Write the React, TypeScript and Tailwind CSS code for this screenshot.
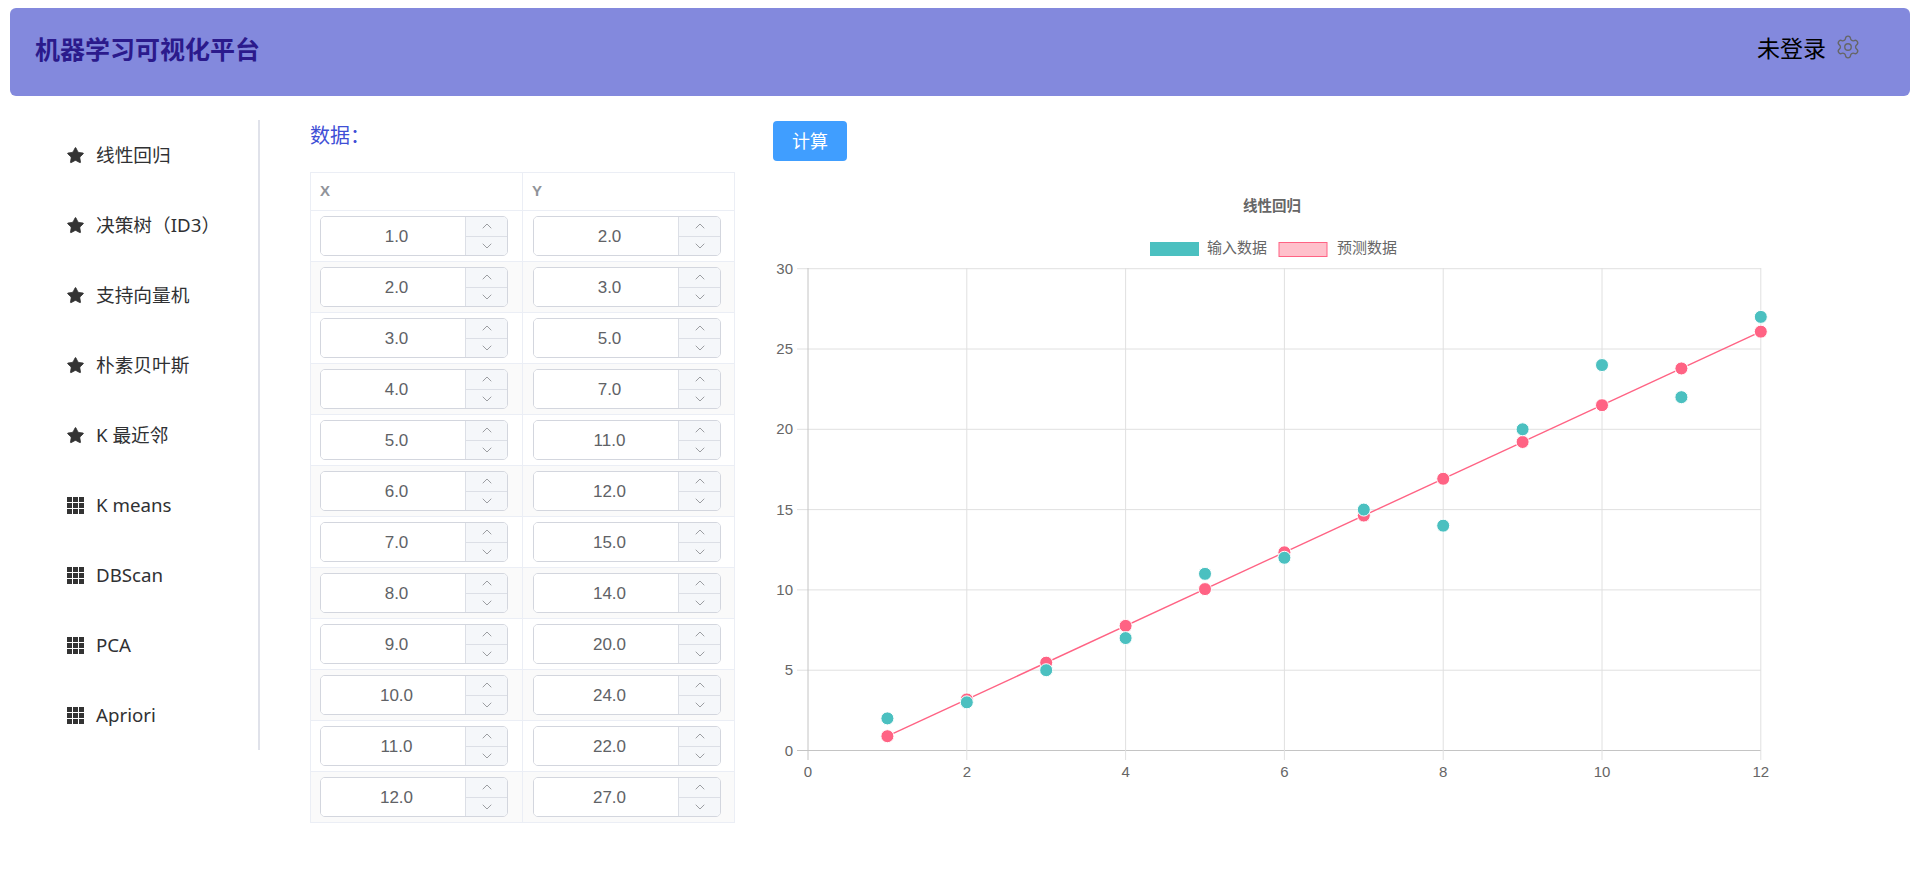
import React from 'react';
import { Settings, ChevronUp, ChevronDown, Star } from 'lucide-react';

const CJK = '"Noto Sans", "Noto Sans CJK SC", sans-serif';

const menuItems = [
  { label: '线性回归', icon: 'star' },
  { label: '决策树（ID3）', icon: 'star' },
  { label: '支持向量机', icon: 'star' },
  { label: '朴素贝叶斯', icon: 'star' },
  { label: 'K 最近邻', icon: 'star' },
  { label: 'K means', icon: 'grid' },
  { label: 'DBScan', icon: 'grid' },
  { label: 'PCA', icon: 'grid' },
  { label: 'Apriori', icon: 'grid' },
];

const rows = [
  [1, 2], [2, 3], [3, 5], [4, 7], [5, 11], [6, 12],
  [7, 15], [8, 14], [9, 20], [10, 24], [11, 22], [12, 27],
];

const GridIcon = () => (
  <svg width="17" height="17" viewBox="0 0 17 17" fill="#333" className="shrink-0">
    {[0, 6, 12].map(x => [0, 6, 12].map(y => (
      <rect key={`${x}-${y}`} x={x} y={y} width="5" height="5" />
    )))}
  </svg>
);

const NumberInput = ({ value }: { value: number }) => (
  <div className="flex h-10 w-[188px] rounded-[5px] border border-[#d3d6de] bg-white overflow-hidden">
    <input
      readOnly
      value={value.toFixed(1)}
      className="min-w-0 flex-1 bg-white pl-[15px] pr-[8px] pt-[1px] text-center text-[17px] text-[#606266] outline-none"
      style={{ fontFamily: '"Liberation Sans", sans-serif' }}
    />
    <div className="flex w-[42px] flex-col border-l border-[#dcdfe6] bg-[#f5f7fa] text-[#85878c]">
      <div className="flex flex-1 items-center justify-center border-b border-[#dcdfe6]">
        <ChevronUp size={16} strokeWidth={1.2} />
      </div>
      <div className="flex flex-1 items-center justify-center">
        <ChevronDown size={16} strokeWidth={1.2} />
      </div>
    </div>
  </div>
);

// chart scale, page pixels
const px = (x: number) => 808 + x * 79.4;
const py = (y: number) => 750.5 - y * 16.06;
const predict = (x: number) => 2.29 * x - 1.4;

const Chart = () => {
  const labelFont = '"Liberation Sans", "Noto Sans CJK SC", sans-serif';
  return (
    <svg width="1147" height="620" viewBox="773 170 1147 620" className="block">
      <text x="1272" y="211" textAnchor="middle" fontSize="14.5" fontWeight="700" fill="#666" fontFamily={labelFont}>线性回归</text>

      <rect x="1150" y="242" width="49" height="14" fill="#4bc0c0" />
      <text x="1207" y="249" fontSize="15" fill="#666" fontFamily={labelFont} dominantBaseline="middle">输入数据</text>
      <rect x="1279" y="242.5" width="48" height="14" fill="#ffc0cb" stroke="#ff6384" />
      <text x="1337" y="249" fontSize="15" fill="#666" fontFamily={labelFont} dominantBaseline="middle">预测数据</text>

      {[0, 5, 10, 15, 20, 25, 30].map(v => (
        <g key={v}>
          <line x1="797" x2="1761" y1={py(v)} y2={py(v)} stroke={v === 0 ? '#c4c4c4' : '#e0e0e0'} />
          <text x="793" y={py(v) + 5} textAnchor="end" fontSize="15" fill="#666" fontFamily={labelFont}>{v}</text>
        </g>
      ))}
      {[0, 2, 4, 6, 8, 10, 12].map(v => (
        <g key={v}>
          <line x1={px(v)} x2={px(v)} y1="268" y2="760" stroke={v === 0 ? '#c4c4c4' : '#e0e0e0'} />
          <text x={px(v)} y="777" textAnchor="middle" fontSize="15" fill="#666" fontFamily={labelFont}>{v}</text>
        </g>
      ))}

      <line x1={px(1)} y1={py(predict(1))} x2={px(12)} y2={py(predict(12))} stroke="#ff6384" strokeWidth="1.4" />
      {rows.map(([x]) => (
        <circle key={x} cx={px(x)} cy={py(predict(x))} r="6.5" fill="#ff6384" stroke="#fff" strokeWidth="1" />
      ))}
      {rows.map(([x, y]) => (
        <circle key={x} cx={px(x)} cy={py(y)} r="6.5" fill="#4bc0c0" stroke="#fff" strokeWidth="1" />
      ))}
    </svg>
  );
};

export default function App() {
  return (
    <div className="h-[877px] overflow-hidden bg-white" style={{ fontFamily: CJK }}>
      {/* Header */}
      <div className="mx-[10px] mt-2 flex h-[88px] items-center justify-between rounded-md bg-[#8389dd] pl-[25px] pr-[49px]">
        <h1 className="pb-[4px] text-[25px] font-bold text-[#2b1a8c]">机器学习可视化平台</h1>
        <div className="flex items-center gap-[9px] pb-[7px]">
          <span className="text-[23px] text-black">未登录</span>
          <Settings size={26} strokeWidth={1.25} className="mb-[3px] text-[#666]" />
        </div>
      </div>

      <div className="flex pt-6">
        {/* Sidebar */}
        <div className="h-[630px] w-[260px] border-r-2 border-[#e0e2ea]">
          {menuItems.map(item => (
            <div key={item.label} className="flex h-[70px] items-center gap-[11px] pl-[66px] text-[18.7px] text-[#303133]">
              {item.icon === 'star' ? (
                <Star size={19} fill="#333" stroke="#333" strokeWidth={1} className="shrink-0" />
              ) : (
                <div className="flex w-[19px] justify-center"><GridIcon /></div>
              )}
              <span className="pt-[1px]">{item.label}</span>
            </div>
          ))}
        </div>

        {/* Data table */}
        <div className="ml-[50px] w-[425px]">
          <div className="h-[52px] pt-[2px] text-[20px] leading-[28px] text-[#3f4fd6]">数据：</div>
          <table className="w-[425px] table-fixed border-collapse border border-[#ebeef5]" style={{ fontFamily: '"Liberation Sans", sans-serif' }}>
            <thead>
              <tr className="h-[38px] text-left text-[15px] font-bold text-[#909399]">
                <th className="w-[212px] border border-[#ebeef5] pl-[9px]">X</th>
                <th className="border border-[#ebeef5] pl-[9px]">Y</th>
              </tr>
            </thead>
            <tbody>
              {rows.map(([x, y], i) => (
                <tr key={x} className={i % 2 === 1 ? 'h-[51px] bg-[#fafafa]' : 'h-[51px] bg-white'}>
                  <td className="border border-[#ebeef5] pl-[9px]"><NumberInput value={x} /></td>
                  <td className="border border-[#ebeef5] pl-[10px]"><NumberInput value={y} /></td>
                </tr>
              ))}
            </tbody>
          </table>
        </div>

        {/* Chart side */}
        <div className="ml-[38px] flex-1">
          <button className="mt-[1px] block h-10 w-[74px] rounded bg-[#409eff] text-[18px] text-white">计算</button>
          <div className="mt-[9px]"><Chart /></div>
        </div>
      </div>
    </div>
  );
}
